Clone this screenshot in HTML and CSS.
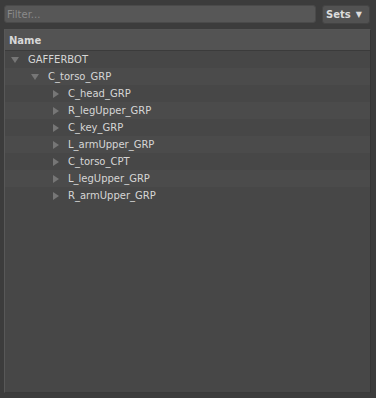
FILE: index.html
```html
<!DOCTYPE html>
<html>
<head>
<meta charset="utf-8">
<link rel="stylesheet" href="styles.css">
</head>
<body>
<div class="topbar">
  <input class="filter" type="text" placeholder="Filter...">
  <div class="sets">Sets <span class="caret">▼</span></div>
</div>
<div class="panel">
  <div class="header">Name</div>
  <div class="rows">
    <div class="row l0"><span class="tri down"></span>GAFFERBOT</div>
    <div class="row l1 alt"><span class="tri down"></span>C_torso_GRP</div>
    <div class="row l2"><span class="tri right"></span>C_head_GRP</div>
    <div class="row l2 alt"><span class="tri right"></span>R_legUpper_GRP</div>
    <div class="row l2"><span class="tri right"></span>C_key_GRP</div>
    <div class="row l2 alt"><span class="tri right"></span>L_armUpper_GRP</div>
    <div class="row l2"><span class="tri right"></span>C_torso_CPT</div>
    <div class="row l2 alt"><span class="tri right"></span>L_legUpper_GRP</div>
    <div class="row l2"><span class="tri right"></span>R_armUpper_GRP</div>
  </div>
</div>
</body>
</html>
```
FILE: styles.css
```css
html, body {
  margin: 0;
  padding: 0;
  background: #3c3c3c;
  width: 376px;
  height: 398px;
  overflow: hidden;
  font-family: "DejaVu Sans", sans-serif;
  font-size: 10px;
  color: #d6d6d6;
}
.topbar {
  display: flex;
  gap: 6px;
  padding: 5px 6px 0 4px;
  height: 18px;
}
.filter {
  flex: 1;
  box-sizing: border-box;
  height: 18px;
  margin: 0;
  border: 1px solid #4a4a4a;
  border-radius: 3px;
  background: #575757;
  padding: 0 2px;
  font-family: "DejaVu Sans", sans-serif;
  font-size: 10px;
  color: #d6d6d6;
  outline: none;
}
.filter::placeholder {
  color: #8a8a8a;
}
.sets {
  box-sizing: border-box;
  width: 48px;
  height: 19px;
  border: 1px solid #444444;
  border-radius: 3px;
  background: #525252;
  font-weight: bold;
  font-size: 10px;
  color: #dcdcdc;
  display: flex;
  align-items: center;
  padding-left: 3px;
  gap: 5px;
}
.caret {
  font-size: 8px;
  font-weight: normal;
}
.panel {
  margin: 6px 5px 0 4px;
  height: 364px;
  box-sizing: border-box;
  background: #474747;
  border-top: 1px solid #555555;
  border-left: 1px solid #585858;
  border-right: 1px solid #353535;
  border-bottom: 1px solid #3a3a3a;
}
.header {
  height: 21px;
  box-sizing: border-box;
  background: #535353;
  border-bottom: 1px solid #3b3b3b;
  font-weight: bold;
  font-size: 10px;
  padding-left: 4px;
  padding-top: 1px;
  line-height: 19px;
  color: #d8d8d8;
}
.row {
  height: 17px;
  line-height: 17px;
  display: flex;
  align-items: center;
  background: #474747;
}
.row.alt {
  background: #4b4b4b;
}
.row.l0 { padding-left: 5px; }
.row.l1 { padding-left: 25px; }
.row.l2 { padding-left: 45px; }
.tri {
  width: 18px;
  height: 8px;
  position: relative;
  flex: none;
}
.tri.down::before {
  content: "";
  position: absolute;
  left: 1px;
  top: 1px;
  border-left: 4px solid transparent;
  border-right: 4px solid transparent;
  border-top: 6px solid #767676;
}
.tri.right::before {
  content: "";
  position: absolute;
  left: 3px;
  top: 0;
  border-top: 4px solid transparent;
  border-bottom: 4px solid transparent;
  border-left: 6px solid #767676;
}
```
